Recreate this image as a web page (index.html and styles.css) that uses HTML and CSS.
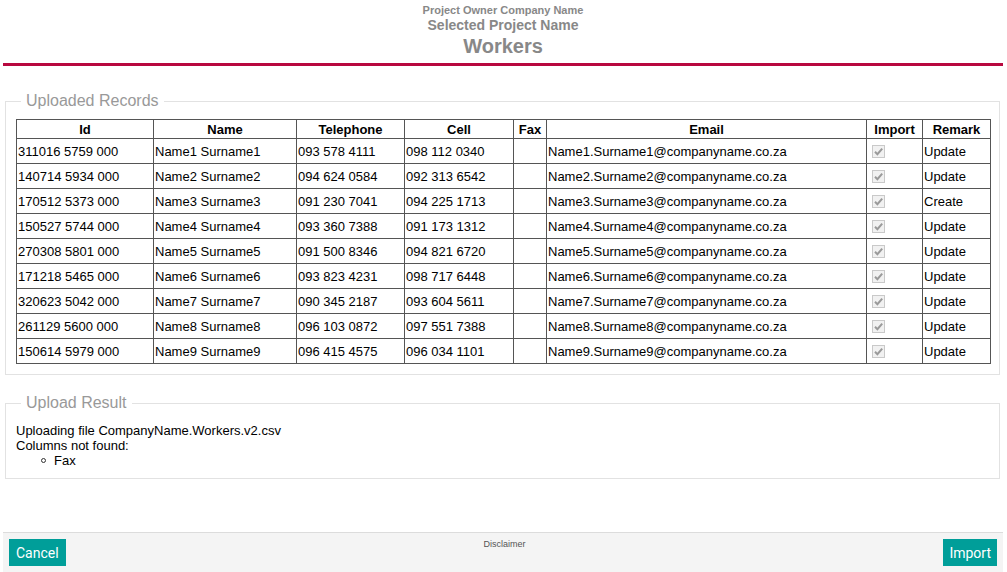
FILE: index.html
```html
<!DOCTYPE html>
<html>
<head>
<meta charset="utf-8">
<link rel="stylesheet" href="styles.css">
</head>
<body>
<div class="page">
  <header class="header">
    <div class="owner">Project Owner Company Name</div>
    <div class="project">Selected Project Name</div>
    <div class="title">Workers</div>
  </header>

  <fieldset class="panel records">
    <legend>Uploaded Records</legend>
    <table class="grid">
      <colgroup>
        <col class="c-id"><col class="c-name"><col class="c-tel"><col class="c-cell"><col class="c-fax"><col class="c-email"><col class="c-imp"><col class="c-rem">
      </colgroup>
      <thead>
        <tr><th>Id</th><th>Name</th><th>Telephone</th><th>Cell</th><th>Fax</th><th>Email</th><th>Import</th><th>Remark</th></tr>
      </thead>
      <tbody>
        <tr><td>311016 5759 000</td><td>Name1 Surname1</td><td>093 578 4111</td><td>098 112 0340</td><td></td><td>Name1.Surname1@companyname.co.za</td><td><svg class="chk" viewBox="0 0 13 13"><rect x="0.5" y="0.5" width="12" height="12"/><path d="M3 6.8 L5.4 9.2 L10.2 3.6"/></svg></td><td>Update</td></tr>
        <tr><td>140714 5934 000</td><td>Name2 Surname2</td><td>094 624 0584</td><td>092 313 6542</td><td></td><td>Name2.Surname2@companyname.co.za</td><td><svg class="chk" viewBox="0 0 13 13"><rect x="0.5" y="0.5" width="12" height="12"/><path d="M3 6.8 L5.4 9.2 L10.2 3.6"/></svg></td><td>Update</td></tr>
        <tr><td>170512 5373 000</td><td>Name3 Surname3</td><td>091 230 7041</td><td>094 225 1713</td><td></td><td>Name3.Surname3@companyname.co.za</td><td><svg class="chk" viewBox="0 0 13 13"><rect x="0.5" y="0.5" width="12" height="12"/><path d="M3 6.8 L5.4 9.2 L10.2 3.6"/></svg></td><td>Create</td></tr>
        <tr><td>150527 5744 000</td><td>Name4 Surname4</td><td>093 360 7388</td><td>091 173 1312</td><td></td><td>Name4.Surname4@companyname.co.za</td><td><svg class="chk" viewBox="0 0 13 13"><rect x="0.5" y="0.5" width="12" height="12"/><path d="M3 6.8 L5.4 9.2 L10.2 3.6"/></svg></td><td>Update</td></tr>
        <tr><td>270308 5801 000</td><td>Name5 Surname5</td><td>091 500 8346</td><td>094 821 6720</td><td></td><td>Name5.Surname5@companyname.co.za</td><td><svg class="chk" viewBox="0 0 13 13"><rect x="0.5" y="0.5" width="12" height="12"/><path d="M3 6.8 L5.4 9.2 L10.2 3.6"/></svg></td><td>Update</td></tr>
        <tr><td>171218 5465 000</td><td>Name6 Surname6</td><td>093 823 4231</td><td>098 717 6448</td><td></td><td>Name6.Surname6@companyname.co.za</td><td><svg class="chk" viewBox="0 0 13 13"><rect x="0.5" y="0.5" width="12" height="12"/><path d="M3 6.8 L5.4 9.2 L10.2 3.6"/></svg></td><td>Update</td></tr>
        <tr><td>320623 5042 000</td><td>Name7 Surname7</td><td>090 345 2187</td><td>093 604 5611</td><td></td><td>Name7.Surname7@companyname.co.za</td><td><svg class="chk" viewBox="0 0 13 13"><rect x="0.5" y="0.5" width="12" height="12"/><path d="M3 6.8 L5.4 9.2 L10.2 3.6"/></svg></td><td>Update</td></tr>
        <tr><td>261129 5600 000</td><td>Name8 Surname8</td><td>096 103 0872</td><td>097 551 7388</td><td></td><td>Name8.Surname8@companyname.co.za</td><td><svg class="chk" viewBox="0 0 13 13"><rect x="0.5" y="0.5" width="12" height="12"/><path d="M3 6.8 L5.4 9.2 L10.2 3.6"/></svg></td><td>Update</td></tr>
        <tr><td>150614 5979 000</td><td>Name9 Surname9</td><td>096 415 4575</td><td>096 034 1101</td><td></td><td>Name9.Surname9@companyname.co.za</td><td><svg class="chk" viewBox="0 0 13 13"><rect x="0.5" y="0.5" width="12" height="12"/><path d="M3 6.8 L5.4 9.2 L10.2 3.6"/></svg></td><td>Update</td></tr>
      </tbody>
    </table>
  </fieldset>

  <fieldset class="panel result">
    <legend>Upload Result</legend>
    <div class="line">Uploading file CompanyName.Workers.v2.csv</div>
    <div class="line">Columns not found:</div>
    <ul class="missing"><li>Fax</li></ul>
  </fieldset>

  <footer class="footer">
    <button class="btn">Cancel</button>
    <div class="disclaimer">Disclaimer</div>
    <button class="btn btn-import">Import</button>
  </footer>
</div>
</body>
</html>
```

FILE: styles.css
```css
html, body {
  margin: 0;
  padding: 0;
  background: #fff;
}

body {
  font-family: "Liberation Sans", Arial, sans-serif;
  font-size: 13px;
  color: #000;
}

.page {
  display: flex;
  flex-direction: column;
  min-height: 100vh;
  padding: 0 4px 0 3px;
  box-sizing: border-box;
}

.header {
  text-align: center;
  color: #888;
  font-weight: bold;
  padding-top: 3px;
  padding-bottom: 4px;
  border-bottom: 3px solid #b8083f;
}

.owner {
  font-size: 11px;
  line-height: 14px;
}

.project {
  font-size: 14px;
  line-height: 16px;
}

.title {
  font-size: 20px;
  line-height: 26px;
}

.panel {
  border: 1px solid #e2e2e2;
  margin: 0 3px 0 2px;
  padding: 9px 10px 10px 10px;
  min-width: 0;
}

.panel legend {
  font-size: 16px;
  line-height: 18px;
  color: #999;
  padding: 0 5px;
  margin-left: 5px;
}

.records {
  margin-top: 26px;
}

.result {
  margin-top: 19px;
}

.result.panel {
  padding-top: 11px;
  padding-bottom: 10px;
}

.grid {
  border-collapse: collapse;
  width: 974px;
  table-layout: fixed;
  border: 1px solid #555;
}

.c-id { width: 137px; }
.c-name { width: 143px; }
.c-tel { width: 108px; }
.c-cell { width: 109px; }
.c-fax { width: 33px; }
.c-email { width: 320px; }
.c-imp { width: 56px; }
.c-rem { width: 68px; }

.grid th,
.grid td {
  border: 1px solid #555;
  padding: 0 1px;
  white-space: nowrap;
  overflow: hidden;
}

.grid th {
  height: 18px;
  font-weight: bold;
  text-align: center;
}

.grid td {
  height: 24px;
  text-align: left;
}

.chk {
  display: block;
  width: 13px;
  height: 13px;
  margin-left: 4px;
}

.chk rect {
  fill: #f1f1f1;
  stroke: #c9c9c9;
  stroke-width: 1;
}

.chk path {
  fill: none;
  stroke: #9a9a9a;
  stroke-width: 2;
}

.line {
  line-height: 15px;
}

.missing {
  list-style: none;
  margin: 0;
  padding-left: 25px;
  line-height: 15px;
}

.missing li::before {
  content: "";
  display: inline-block;
  width: 3px;
  height: 3px;
  border: 1px solid #333;
  border-radius: 50%;
  margin-right: 8px;
  vertical-align: middle;
  position: relative;
  top: -1px;
}

.footer {
  margin-top: auto;
  display: grid;
  grid-template-columns: auto 1fr auto;
  align-items: start;
  background: #f4f4f4;
  border-top: 1px solid #dcdcdc;
  padding: 6px;
}

.disclaimer {
  text-align: center;
  font-size: 9px;
  line-height: 12px;
  color: #555;
  margin-top: -1px;
}

.btn {
  font-family: Roboto, "Liberation Sans", sans-serif;
  font-size: 14px;
  height: 27px;
  padding: 0 7px;
  border: none;
  background: #009e99;
  color: #fff;
  cursor: pointer;
}

.btn-import {
  padding: 0 6px;
}
```
